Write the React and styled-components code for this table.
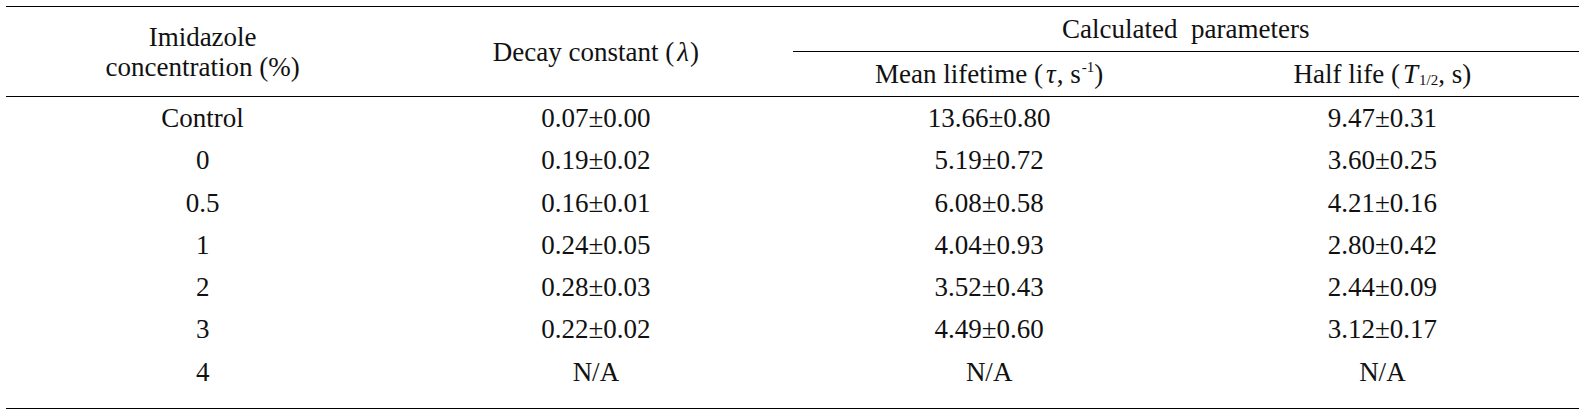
import React from 'react';
import styled, { createGlobalStyle } from 'styled-components';

const GlobalStyle = createGlobalStyle`
  html, body {
    margin: 0;
    padding: 0;
    background: #fff;
  }
`;

const Page = styled.div`
  padding: 6px 5px 0 6px;
`;

const Table = styled.table`
  width: 1573px;
  border-collapse: collapse;
  font-family: "Liberation Serif", "Times New Roman", serif;
  font-size: 27px;
  color: #111;
  border-top: 1.5px solid #000;
  border-bottom: 1.5px solid #000;
`;

const HeadCell = styled.th`
  font-weight: 400;
  padding: 0;
  text-align: center;
  vertical-align: middle;
  line-height: 30px;
  width: 25%;
  height: ${(p) => p.$h || 44}px;
  border-bottom: ${(p) => (p.$rule ? '1.5px solid #000' : 'none')};
`;

const Thead = styled.thead`
  border-bottom: 1.5px solid #000;
`;

const Cell = styled.td`
  padding: 0 0 ${(p) => (p.$last ? 15 : 0)}px;
  text-align: center;
  vertical-align: top;
  line-height: 42.3px;
  height: 42.3px;
`;

const Ital = styled.i`
  font-style: italic;
  padding: 0 1px 0 3px;
`;

const Sub = styled.sub`
  font-size: 15px;
  vertical-align: -2px;
  line-height: 0;
`;

const Sup = styled.sup`
  font-size: 15px;
  vertical-align: 11px;
  line-height: 0;
  padding-left: 1px;
`;

const rows = [
  ['Control', '0.07±0.00', '13.66±0.80', '9.47±0.31'],
  ['0', '0.19±0.02', '5.19±0.72', '3.60±0.25'],
  ['0.5', '0.16±0.01', '6.08±0.58', '4.21±0.16'],
  ['1', '0.24±0.05', '4.04±0.93', '2.80±0.42'],
  ['2', '0.28±0.03', '3.52±0.43', '2.44±0.09'],
  ['3', '0.22±0.02', '4.49±0.60', '3.12±0.17'],
  ['4', 'N/A', 'N/A', 'N/A'],
];

export default function App() {
  return (
    <>
      <GlobalStyle />
      <Page>
        <Table>
          <Thead>
            <tr>
              <HeadCell rowSpan={2}>
                Imidazole
                <br />
                concentration (%)
              </HeadCell>
              <HeadCell rowSpan={2}>
                Decay constant (<Ital>λ</Ital>)
              </HeadCell>
              <HeadCell colSpan={2} $h={44} $rule>
                Calculated&nbsp; parameters
              </HeadCell>
            </tr>
            <tr>
              <HeadCell $h={44}>
                Mean lifetime (<Ital>τ</Ital>, s<Sup>-1</Sup>)
              </HeadCell>
              <HeadCell $h={44}>
                Half life (<Ital>T</Ital>
                <Sub>1/2</Sub>, s)
              </HeadCell>
            </tr>
          </Thead>
          <tbody>
            {rows.map((r, i) => (
              <tr key={i}>
                {r.map((v, j) => (
                  <Cell key={j} $last={i === rows.length - 1}>
                    {v}
                  </Cell>
                ))}
              </tr>
            ))}
          </tbody>
        </Table>
      </Page>
    </>
  );
}
